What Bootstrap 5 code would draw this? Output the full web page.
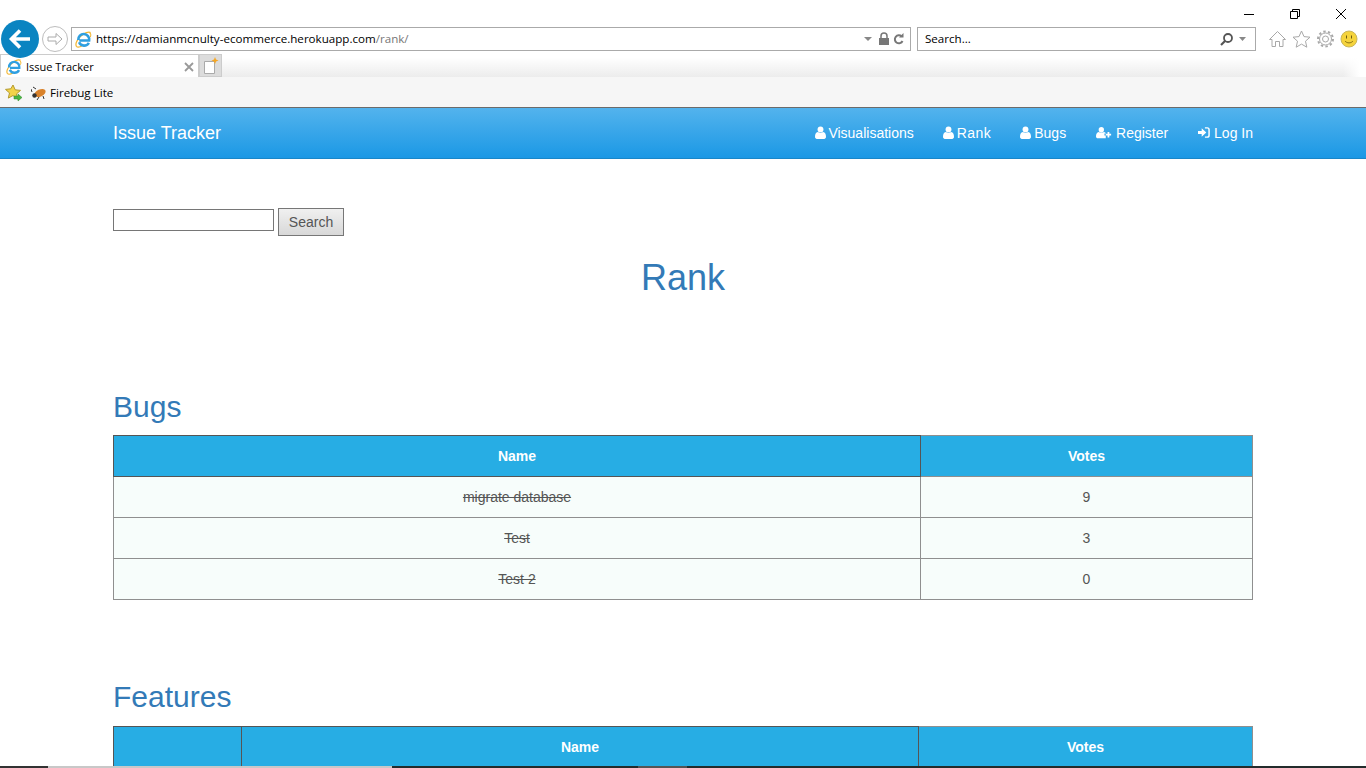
<!DOCTYPE html>
<html lang="en">
<head>
    <meta charset="UTF-8">
    <meta name="viewport" content="width=device-width, initial-scale=1.0">
    <title>Issue Tracker</title>
    <link href="https://cdn.jsdelivr.net/npm/bootstrap@5.3.0/dist/css/bootstrap.min.css" rel="stylesheet">
    <style>
        html, body { height: 768px; overflow: hidden; }
        body { background: #fff; color: #555; font-family: "Liberation Sans", Arial, sans-serif; font-size: 14px; }

        /* browser chrome */
        .ie-chrome { height: 108px; font-family: "Open Sans", "Noto Sans", sans-serif; font-size: 11.6px; color: #000; }
        .ie-caption { height: 26px; padding-right: 17px; gap: 30px; }
        .ie-caption svg { display: block; margin-top: 8px; }
        .ie-toolbar { height: 26px; padding-left: 1px; margin-bottom: 2px; }
        .ie-back { width: 38px; height: 38px; margin: -6px 0; border-radius: 50%; background: #0a84c1; flex: none; z-index: 2; }
        .ie-forward { width: 26px; height: 26px; margin-left: 3px; border: 1px solid #bdbdbd; border-radius: 50%; background: #fff; flex: none; }
        .ie-field { height: 24px; border: 1px solid #aaa; background: #fff; }
        .ie-address { width: 840px; margin-left: 3px; padding: 0 4px 0 3px; }
        .ie-address .dim { color: #777; }
        .ie-search { width: 339px; margin-left: 6px; padding: 0 7px; }
        .ie-tools { gap: 5px; margin-left: 12px; }
        .ie-tabs { height: 23px; }
        .ie-tab { width: 199px; height: 23px; border: 1px solid #ccc; border-bottom: 0; background: #fff; padding: 2px 4px 0 5px; flex: none; font-size: 11px; }
        .ie-newtab { width: 23px; height: 23px; background: #dcdcdc; border: 1px solid #ccc; flex: none; }
        .ie-shade { width: 1138px; height: 23px; background: linear-gradient(to right, rgba(255,255,255,0) 98.5%, #fff), linear-gradient(#fff 15%, #ececec); }
        .ie-favs { height: 31px; background: #f6f6f6; border-bottom: 1px solid #6b6b6b; padding: 2px 0 0 5px; }
        .fav-label { margin-left: 3px; }

        /* site */
        .site-nav { height: 51px; padding: 0; background: linear-gradient(#53b3ed, #1b98e5); border-bottom: 1px solid #1a86c8; }
        .site-nav .navbar-brand { color: #fff; font-size: 18px; padding: 0; margin: 0; }
        .site-nav .nav-link { color: #fff; padding: 0; margin-left: 30px; font-size: 14px; }
        .site-nav .nav-link svg { vertical-align: -1px; }
        .site-nav .nav-link.nav-tight { margin-left: 29px; }
        .nav-user { margin-right: -1px; }
        .nav-rank { letter-spacing: .5px; }
        .search-line { padding-top: 50px; height: 78px; }
        .search-input { width: 161px; height: 22px; border: 1px solid #767676; background: #fff; }
        .search-btn { width: 66px; height: 28px; margin-left: 4px; margin-top: -1px; padding: 0; border: 1px solid #777; border-radius: 0; color: #555; font-size: 14px; background: linear-gradient(#f0f0f0, #d8d8d8); }
        .page-title { color: #337ab7; font-size: 36px; line-height: 40px; margin: 21px 0 0; font-weight: 400; }
        .section-title { color: #337ab7; font-size: 30px; line-height: 33px; margin: 0 0 12px; font-weight: 400; }
        .features-block .section-title { margin-bottom: 13px; }
        .rank-table { width: 1140px; table-layout: fixed; border-collapse: collapse; margin: 0; }
        .rank-table th, .rank-table td { height: 41px; padding: 0; text-align: center; vertical-align: middle; border: 1px solid #8f8f8f; }
        .rank-table th { background: #27ade4; color: #fff; font-weight: 700; border-color: #555; }
        .rank-table th:last-child { border-color: #8f8f8f; }
        .rank-table td { background: #f7fdfb; color: #555; }
        .done-name { text-decoration: line-through; }
        .col-bug-name { width: 807px; }
        .col-feat-id { width: 128px; }
        .col-feat-name { width: 677px; }
        .bugs-block { margin-top: 92px; }
        .features-block { margin-top: 80px; }

        /* taskbar edge */
        .ie-taskbar { position: absolute; left: 0; right: 0; bottom: 0; height: 2px; background: #232c2c; z-index: 5; }
        .ie-taskbar span { display: block; height: 2px; }
        .strip-a { width: 48px; background: #333; }
        .strip-b { width: 344px; background: #c8c8c8; }
        .strip-c { width: 246px; background: #232c2c; }
        .strip-d { width: 49px; background: #555; }
    </style>
</head>
<body>
    <svg width="0" height="0" class="position-absolute">
        <defs>
            <symbol id="ie-logo" viewBox="0 0 18 18">
                <path d="M16.500 1.500C14.500 .3 10 1.800 6 5.500 2 9.300 0 14 1.500 16.200c1.200 1.500 4 .8 6.500-.8" fill="none" stroke="#f2b632" stroke-width="1.300"/>
                <path d="M3.500 9.500a5.800 5.800 0 1 1 11.500 0.500H4.500M14.700 12.500a5.800 5.800 0 0 1-10.400-.5" fill="none" stroke="#2f9fe0" stroke-width="2.700"/>
                <path d="M15 1.800c1.800 .3 2.200 2.200 1.200 4.700" fill="none" stroke="#f2b632" stroke-width="1.100"/>
            </symbol>
            <symbol id="fa-user" viewBox="0 0 12 14">
                <circle cx="6" cy="3.600" r="3.200" fill="#fff"/>
                <path d="M0 12c0-3.200 1-5.400 3-5.600 1.800 1.200 4.200 1.200 6 0 2 .2 3 2.400 3 5.600 0 1.300-1 2-2 2H2c-1 0-2-.7-2-2z" fill="#fff"/>
            </symbol>
        </defs>
    </svg>

    <div class="ie-chrome">
        <div class="ie-caption d-flex justify-content-end">
            <svg width="16" height="12" viewBox="0 0 16 12"><path d="M3 6.500h10" stroke="#000"/></svg>
            <svg width="16" height="12" viewBox="0 0 16 12" fill="none" stroke="#000"><path d="M3.500 3.500h7v7h-7zM5.500 3.500v-2h7v7h-2"/></svg>
            <svg width="16" height="12" viewBox="0 0 16 12" fill="none" stroke="#000"><path d="M3 1l10 10M13 1L3 11"/></svg>
        </div>
        <div class="ie-toolbar d-flex align-items-center">
            <div class="ie-back d-flex align-items-center justify-content-center">
                <svg width="24" height="22" viewBox="0 0 24 22" fill="none" stroke="#fff" stroke-width="3.600"><path d="M12 2.500L3.500 11l8.500 8.500M4 11h18"/></svg>
            </div>
            <div class="ie-forward d-flex align-items-center justify-content-center">
                <svg width="16" height="14" viewBox="0 0 16 14" fill="none" stroke="#aaa"><path d="M1 5h8V1.500L15 7l-6 5.500V9H1z"/></svg>
            </div>
            <div class="ie-field ie-address d-flex align-items-center">
                <svg width="17" height="17"><use href="#ie-logo"/></svg>
                <span class="ms-1">https://damianmcnulty-ecommerce.herokuapp.com<span class="dim">/rank/</span></span>
                <svg class="ms-auto" width="42" height="14" viewBox="0 0 42 14">
                    <path d="M0 5h8L4 9z" fill="#888"/>
                    <path d="M15 6h10v7H15z" fill="#777"/>
                    <path d="M17 6V4a3 3 0 016 0v2" fill="none" stroke="#777" stroke-width="1.500"/>
                    <path d="M38.500 9a4 4 0 11-.8-4.500" fill="none" stroke="#777" stroke-width="2"/>
                    <path d="M39.500 1v4.500H35z" fill="#777"/>
                </svg>
            </div>
            <div class="ie-field ie-search d-flex align-items-center">
                <span>Search...</span>
                <svg class="ms-auto" width="28" height="14" viewBox="0 0 28 14">
                    <circle cx="8" cy="6" r="4" fill="none" stroke="#555" stroke-width="1.800"/>
                    <path d="M5 9l-4 4" stroke="#555" stroke-width="2.200"/>
                    <path d="M19 5h7l-3.500 4z" fill="#888"/>
                </svg>
            </div>
            <div class="ie-tools d-flex align-items-center">
                <svg width="19" height="18" viewBox="0 0 19 18" fill="#fff" stroke="#a8a8a8"><path d="M1.500 9.500L9.500 1.500l8 8h-2.500v7h-3.500v-5h-4v5H4v-7z"/></svg>
                <svg width="19" height="18" viewBox="0 0 19 18" fill="#fff" stroke="#a8a8a8"><path d="M9.500 1l2.500 5.600 6 .6-4.500 4 1.300 6-5.300-3.100-5.300 3.100 1.300-6-4.500-4 6-.6z"/></svg>
                <svg width="19" height="18" viewBox="0 0 19 18" fill="none" stroke="#a8a8a8"><circle cx="9.500" cy="9" r="3"/><circle cx="9.500" cy="9" r="6" stroke-width="1"/><circle cx="9.500" cy="9" r="7.500" stroke-width="2" stroke-dasharray="2.400 2.300"/></svg>
                <svg width="18" height="18" viewBox="0 0 18 18"><circle cx="9" cy="9" r="8" fill="#f5d33c" stroke="#c9b65a"/><path d="M6.500 5.500v3M11.500 5.500v3" stroke="#6b5a10"/><path d="M5 11c2 2.500 6 2.500 8 0" fill="none" stroke="#8a7414"/></svg>
            </div>
        </div>
        <div class="ie-tabs d-flex">
            <div class="ie-tab d-flex align-items-center">
                <svg width="16" height="16"><use href="#ie-logo"/></svg>
                <span class="ms-1">Issue Tracker</span>
                <svg class="ms-auto" width="10" height="10" viewBox="0 0 10 10"><path d="M1 1l8 8M9 1L1 9" stroke="#999" stroke-width="1.800"/></svg>
            </div>
            <div class="ie-newtab d-flex align-items-center justify-content-center">
                <svg width="16" height="18" viewBox="0 0 16 18"><path d="M1.500 4.500h10v12h-10z" fill="#fff" stroke="#aaa"/><path d="M12 0l1 2.500 2.500 1-2.500 1-1 2.500-1-2.500-2.500-1 2.500-1z" fill="#f5a623"/></svg>
            </div>
            <div class="ie-shade"></div>
        </div>
        <div class="ie-favs d-flex align-items-center">
            <svg width="18" height="18" viewBox="0 0 18 18"><path d="M8 1l2.200 4.800 5.300.6-4 3.500 1.200 5.200L8 11.500 3.300 14.100l1.200-5.200-4-3.500 5.300-.6z" fill="#f3d34a" stroke="#b39a2e"/><path d="M9 12h4v-2l4 3.500-4 3.500v-2H9z" fill="#4bb543" stroke="#2d8a2a" stroke-width=".5"/></svg>
            <svg class="ms-2" width="16" height="14" viewBox="0 0 16 14"><ellipse cx="9" cy="7" rx="6" ry="3.500" transform="rotate(-25 9 7)" fill="#d9822b"/><circle cx="3.500" cy="9.500" r="2.200" fill="#333"/><path d="M5 3L2 1M8 11l-2 3M12 10l1 3M1 6L0 3" stroke="#333"/></svg>
            <span class="fav-label">Firebug Lite</span>
        </div>
    </div>

    <nav class="navbar site-nav">
        <div class="container px-0">
            <a class="navbar-brand" href="#">Issue Tracker</a>
            <div class="d-flex">
                <a class="nav-link" href="#"><svg class="nav-user" width="11" height="13"><use href="#fa-user"/></svg> Visualisations</a>
                <a class="nav-link nav-tight" href="#"><svg class="nav-user" width="11" height="13"><use href="#fa-user"/></svg> <span class="nav-rank">Rank</span></a>
                <a class="nav-link nav-tight" href="#"><svg class="nav-user" width="11" height="13"><use href="#fa-user"/></svg> Bugs</a>
                <a class="nav-link" href="#"><svg width="16" height="13" viewBox="0 0 18 13"><circle cx="6" cy="3.400" r="3" fill="#fff"/><path d="M0 11c0-3 1-5 3-5.200 1.800 1.100 4.200 1.100 6 0 1 .1 1.800.7 2.300 1.700H9.500V10H11v3H2c-1 0-2-.7-2-2z" fill="#fff"/><path d="M14 6v6M11 9h6" stroke="#fff" stroke-width="2"/></svg> Register</a>
                <a class="nav-link" href="#"><svg width="12" height="13" viewBox="0 0 13 13"><path d="M0 5h4V2l5 4.500L4 11V8H0z" fill="#fff"/><path d="M7.500 1.500H10A2 2 0 0112 3.500v6a2 2 0 01-2 2H7.500" fill="none" stroke="#fff" stroke-width="1.600"/></svg> Log In</a>
            </div>
        </div>
    </nav>

    <main class="container px-0">
        <form class="search-line d-flex align-items-start">
            <input class="search-input" type="text" aria-label="Search">
            <button class="btn search-btn" type="button">Search</button>
        </form>
        <h1 class="page-title text-center">Rank</h1>

        <section class="bugs-block">
            <h2 class="section-title">Bugs</h2>
            <table class="rank-table">
                <colgroup><col class="col-bug-name"><col></colgroup>
                <thead><tr><th>Name</th><th>Votes</th></tr></thead>
                <tbody>
                    <tr><td><span class="done-name">migrate database</span></td><td>9</td></tr>
                    <tr><td><span class="done-name">Test</span></td><td>3</td></tr>
                    <tr><td><span class="done-name">Test 2</span></td><td>0</td></tr>
                </tbody>
            </table>
        </section>

        <section class="features-block">
            <h2 class="section-title">Features</h2>
            <table class="rank-table">
                <colgroup><col class="col-feat-id"><col class="col-feat-name"><col></colgroup>
                <thead><tr><th></th><th>Name</th><th>Votes</th></tr></thead>
            </table>
        </section>
    </main>

    <div class="ie-taskbar d-flex">
        <span class="strip-a"></span><span class="strip-b"></span><span class="strip-c"></span><span class="strip-d"></span>
    </div>

    <script src="https://cdn.jsdelivr.net/npm/bootstrap@5.3.0/dist/js/bootstrap.bundle.min.js"></script>
</body>
</html>
